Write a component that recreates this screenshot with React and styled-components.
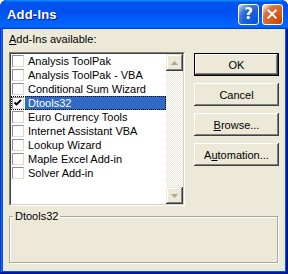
import React from "react";
import styled, { createGlobalStyle } from "styled-components";

const GlobalStyle = createGlobalStyle`
  html, body {
    margin: 0;
    padding: 0;
    background: #ffffff;
  }
  body {
    font-family: "Liberation Sans", Arial, sans-serif;
    font-size: 11px;
    color: #000;
  }
`;

const addIns = [
  { name: "Analysis ToolPak", checked: false },
  { name: "Analysis ToolPak - VBA", checked: false },
  { name: "Conditional Sum Wizard", checked: false },
  { name: "Dtools32", checked: true, selected: true },
  { name: "Euro Currency Tools", checked: false },
  { name: "Internet Assistant VBA", checked: false },
  { name: "Lookup Wizard", checked: false },
  { name: "Maple Excel Add-in", checked: false },
  { name: "Solver Add-in", checked: false },
];

const App = () => {
  return (
    <>
      <GlobalStyle />
      <Window>
        <TitleBar>
          <Title>Add-Ins</Title>
          <HelpButton>?</HelpButton>
          <CloseButton>
            <svg width="21" height="21" viewBox="0 0 21 21">
              <path
                d="M6 6 L14 14 M14 6 L6 14"
                stroke="#fff"
                strokeWidth="2.2"
                strokeLinecap="square"
              />
            </svg>
          </CloseButton>
        </TitleBar>
        <Client>
          <TopRow>
            <LeftCol>
              <Label>
                <U>A</U>dd-Ins available:
              </Label>
              <ListOuter>
                <ListInner>
                  <Items>
                    {addIns.map((item) => (
                      <Row key={item.name} $focused={item.selected}>
                        <Check>
                          {item.checked && (
                            <svg width="10" height="10" viewBox="0 0 10 10">
                              <path
                                d="M1.5 4.5 L3.5 6.5 L8 2"
                                stroke="#000"
                                strokeWidth="1.8"
                                fill="none"
                              />
                            </svg>
                          )}
                        </Check>
                        <ItemText $selected={item.selected}>{item.name}</ItemText>
                      </Row>
                    ))}
                  </Items>
                  <ScrollBar>
                    <ScrollButton>
                      <svg width="7" height="4" viewBox="0 0 7 4">
                        <path d="M3.5 0 L7 4 L0 4 Z" fill="#aca899" />
                      </svg>
                    </ScrollButton>
                    <Track />
                    <ScrollButton>
                      <svg width="7" height="4" viewBox="0 0 7 4">
                        <path d="M0 0 L7 0 L3.5 4 Z" fill="#aca899" />
                      </svg>
                    </ScrollButton>
                  </ScrollBar>
                </ListInner>
              </ListOuter>
            </LeftCol>
            <RightCol>
              <Button $default>OK</Button>
              <Button>Cancel</Button>
              <Button>
                <U>B</U>rowse...
              </Button>
              <Button>
                A<U>u</U>tomation...
              </Button>
            </RightCol>
          </TopRow>
          <GroupBox>
            <Legend>Dtools32</Legend>
          </GroupBox>
        </Client>
      </Window>
    </>
  );
};

const Window = styled.div`
  width: 288px;
  height: 274px;
  display: flex;
  flex-direction: column;
  background: #0054e3;
  border-radius: 7px 7px 0 0;
  box-shadow: inset -1px -1px #00138c, inset 1px 1px #0831d9,
    inset -2px -2px #001ea0, inset 2px 2px #166aee;
  overflow: hidden;
`;

const TitleBar = styled.div`
  height: 29px;
  flex: none;
  display: flex;
  align-items: center;
  gap: 3px;
  padding: 0 5px 0 7px;
  border-radius: 7px 7px 0 0;
  background: linear-gradient(
    180deg,
    #0997ff,
    #0053ee 8%,
    #0050ee 40%,
    #0066ff 88%,
    #0066ff 93%,
    #005bff 95%,
    #003dd7 96%,
    #003dd7
  );
`;

const Title = styled.div`
  flex: 1;
  font-family: "Liberation Sans", Arial, sans-serif;
  font-weight: bold;
  font-size: 13px;
  color: #fff;
  text-shadow: 1px 1px #0a1883;
  letter-spacing: 0.2px;
`;

const TitleButton = styled.div`
  width: 21px;
  height: 21px;
  box-sizing: border-box;
  border: 1px solid #fff;
  border-radius: 3px;
  display: flex;
  align-items: center;
  justify-content: center;
`;

const HelpButton = styled(TitleButton)`
  background: radial-gradient(
    circle at 90% 90%,
    #0054e9 0%,
    #2263d5 55%,
    #4479e4 70%,
    #a3bbec 90%,
    #fff 100%
  );
  color: #fff;
  font-family: "DejaVu Sans", sans-serif;
  font-weight: bold;
  font-size: 15px;
  line-height: 1;
`;

const CloseButton = styled(TitleButton)`
  background: radial-gradient(
    circle at 90% 90%,
    #cc4600 0%,
    #dc6527 55%,
    #cd7546 70%,
    #ffccb2 90%,
    #fff 100%
  );
`;

const Client = styled.div`
  flex: 1;
  margin: 0 3px 3px;
  background: #ece9d8;
  padding: 4px 6px 8px;
  display: flex;
  flex-direction: column;
`;

const TopRow = styled.div`
  display: flex;
  gap: 9px;
`;

const LeftCol = styled.div`
  width: 176px;
  display: flex;
  flex-direction: column;
`;

const Label = styled.div`
  height: 13px;
  line-height: 13px;
  margin-bottom: 6px;
`;

const U = styled.span`
  text-decoration: underline;
`;

const ListOuter = styled.div`
  height: 154px;
  box-sizing: border-box;
  border: 1px solid;
  border-color: #808080 #fff #fff #808080;
`;

const ListInner = styled.div`
  height: 100%;
  box-sizing: border-box;
  border: 1px solid;
  border-color: #404040 #d4d0c8 #d4d0c8 #404040;
  background: #fff;
  display: flex;
`;

const Items = styled.div`
  flex: 1;
  display: flex;
  flex-direction: column;
`;

const Row = styled.div`
  height: 14px;
  display: flex;
  align-items: center;
  outline: ${(p) => (p.$focused ? "1px dotted #000" : "none")};
  outline-offset: -1px;
`;

const Check = styled.div`
  width: 12px;
  height: 12px;
  box-sizing: border-box;
  margin-left: 1px;
  border: 1px solid;
  border-color: #8e8e8e #dcdad0 #dcdad0 #8e8e8e;
  background: #fff;
  display: flex;
  align-items: center;
  justify-content: center;
`;

const ItemText = styled.div`
  flex: 1;
  height: 14px;
  line-height: 14px;
  margin-left: 1px;
  padding-left: 3px;
  white-space: nowrap;
  background: ${(p) => (p.$selected ? "#316ac5" : "transparent")};
  color: ${(p) => (p.$selected ? "#fff" : "#000")};
`;

const ScrollBar = styled.div`
  width: 17px;
  display: flex;
  flex-direction: column;
`;

const ScrollButton = styled.div`
  height: 17px;
  flex: none;
  background: #ece9d8;
  box-shadow: inset -1px -1px #404040, inset 1px 1px #ece9d8,
    inset -2px -2px #808080, inset 2px 2px #fff;
  display: flex;
  align-items: center;
  justify-content: center;
`;

const Track = styled.div`
  flex: 1;
  background: repeating-conic-gradient(#fff 0 25%, #ece9d8 0 50%) 0 0 / 2px
    2px;
`;

const RightCol = styled.div`
  width: 85px;
  padding-top: 20px;
  display: flex;
  flex-direction: column;
  gap: 7px;
`;

const Button = styled.button`
  height: 23px;
  padding: 0;
  border: none;
  background: #ece9d8;
  font-family: "Liberation Sans", Arial, sans-serif;
  font-size: 11px;
  color: #000;
  box-shadow: ${(p) =>
    p.$default
      ? "inset 0 0 0 1px #000, inset -2px -2px #404040, inset 2px 2px #fff, inset -3px -3px #808080"
      : "inset -1px -1px #404040, inset 1px 1px #fff, inset -2px -2px #808080"};
`;

const GroupBox = styled.fieldset`
  margin: 4px 1px 0 0;
  padding: 0 3px;
  height: 53px;
  box-sizing: border-box;
  border: 1px solid #aca899;
  box-shadow: 1px 1px 0 #fff, inset 1px 1px 0 #fff;
`;

const Legend = styled.legend`
  padding: 0 2px;
  line-height: 13px;
  font-size: 11px;
`;

export default App;
